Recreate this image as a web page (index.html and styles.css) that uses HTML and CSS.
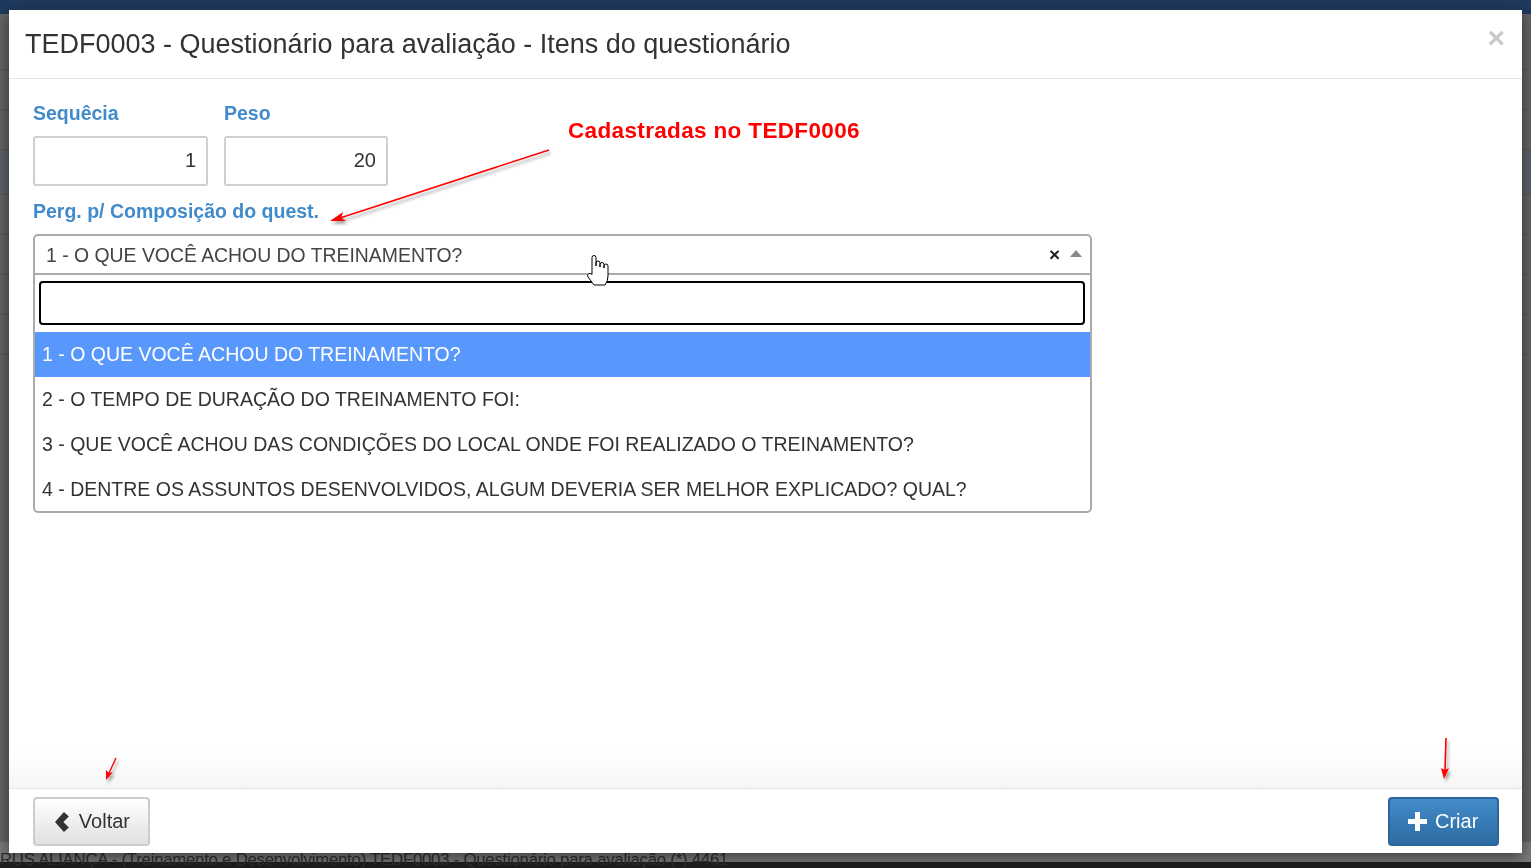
FILE: index.html
```html
<!DOCTYPE html>
<html lang="pt">
<head>
<meta charset="utf-8">
<title>TEDF0003</title>
<link rel="stylesheet" href="styles.css">
</head>
<body>
<div class="app">
  <div class="topbar"></div>
  <div class="content">
    <div class="row"></div><div class="row"></div><div class="row"></div>
    <div class="row sel"></div><div class="row"></div><div class="row"></div>
    <div class="row"></div><div class="row"></div>
  </div>
  <div class="statusbar"><span>RUS ALIANÇA - (Treinamento e Desenvolvimento) TEDF0003 - Questionário para avaliação (*) 4461</span></div>
</div>

<div class="modal">
  <div class="modal-header">
    <h4 class="modal-title">TEDF0003 - Questionário para avaliação - Itens do questionário</h4>
    <span class="close">×</span>
  </div>
  <div class="modal-body">
    <div class="row-fields">
      <div class="form-group g-seq">
        <label class="lbl">Sequêcia</label>
        <div class="input">1</div>
      </div>
      <div class="form-group g-peso">
        <label class="lbl">Peso</label>
        <div class="input">20</div>
      </div>
    </div>
    <div class="form-group">
      <label class="lbl">Perg. p/ Composição do quest.</label>
      <div class="select2">
        <div class="selection">
          <span class="sel-text">1 - O QUE VOCÊ ACHOU DO TREINAMENTO?</span>
          <span class="sel-tools">
            <span class="clear">×</span>
            <span class="arrow"></span>
          </span>
        </div>
        <div class="search-wrap"><div class="search"></div></div>
        <ul class="options">
          <li class="opt active">1 - O QUE VOCÊ ACHOU DO TREINAMENTO?</li>
          <li class="opt">2 - O TEMPO DE DURAÇÃO DO TREINAMENTO FOI:</li>
          <li class="opt">3 - QUE VOCÊ ACHOU DAS CONDIÇÕES DO LOCAL ONDE FOI REALIZADO O TREINAMENTO?</li>
          <li class="opt">4 - DENTRE OS ASSUNTOS DESENVOLVIDOS, ALGUM DEVERIA SER MELHOR EXPLICADO? QUAL?</li>
        </ul>
      </div>
    </div>
  </div>
  <div class="modal-footer">
    <button class="btn btn-default">
      <svg class="ico" width="15" height="20" viewBox="0 0 15 20"><path d="M9 0 L14 4.5 L8.5 10 L14 15.5 L9 20 L0 10 Z" fill="#333"/></svg>
      <span>Voltar</span>
    </button>
    <button class="btn btn-primary">
      <svg class="ico" width="19" height="19" viewBox="0 0 19 19"><path d="M7 0 H12 V7 H19 V12 H12 V19 H7 V12 H0 V7 H7 Z" fill="#fff"/></svg>
      <span>Criar</span>
    </button>
  </div>

  <div class="note">Cadastradas no TEDF0006</div>
  <svg class="arrows" width="1513" height="843" viewBox="9 10 1513 843">
    <defs>
      <filter id="sh" x="-20%" y="-20%" width="140%" height="140%">
        <feGaussianBlur in="SourceAlpha" stdDeviation="1.5"/>
        <feOffset dx="2" dy="3" result="b"/>
        <feComponentTransfer><feFuncA type="linear" slope="0.35"/></feComponentTransfer>
        <feMerge><feMergeNode/><feMergeNode in="SourceGraphic"/></feMerge>
      </filter>
    </defs>
    <g filter="url(#sh)" fill="#f00" stroke="#f00">
      <line x1="549" y1="150" x2="340" y2="218" stroke-width="1.6"/>
      <path d="M330 221 L343 212 L341 218 L346 221 Z" stroke="none"/>
      <line x1="116" y1="758" x2="109" y2="773" stroke-width="1.4"/>
      <path d="M106 780 L106 770 L109 773 L113 772 Z" stroke="none"/>
      <line x1="1446" y1="738" x2="1445" y2="770" stroke-width="1.6"/>
      <path d="M1444 779 L1441 768 L1445 770 L1449 768 Z" stroke="none"/>
    </g>
    <path class="hand" d="M592 270 V257.5 a2 2 0 0 1 4 0 V266 V263 a2 2 0 0 1 4 0 V267 V264.5 a2 2 0 0 1 4 0 V268 V266 a2 2 0 0 1 4 0 V276 q0 5 -3 9 H594 l-6 -8 q-1.5 -2.5 1 -3.5 q1.5 -0.5 3 1 Z" fill="#fff" stroke="#000" stroke-width="1"/>
  </svg>
</div>
</body>
</html>
```

FILE: styles.css
```css
* { box-sizing: border-box; }
html, body { margin: 0; padding: 0; height: 100%; }
body {
  font-family: "Liberation Sans", Arial, sans-serif;
  background: #676767;
  overflow: hidden;
}
.app {
  height: 100vh;
  display: flex;
  flex-direction: column;
}
.topbar {
  height: 14px;
  background: #1f3a5f;
  flex: none;
}
.content {
  flex: 1;
  background: #646464;
  display: flex;
  flex-direction: column;
  padding-top: 16px;
}
.content .row {
  height: 40px;
  border-bottom: 1px solid #575757;
}
.content .row.sel { background: #5d6169; height: 45px; }
.statusbar {
  height: 26px;
  flex: none;
  background: linear-gradient(#7a7a7a 0 20px, #1e1e1e 20px);
  color: #2e2e2e;
  font-size: 16.7px;
  line-height: 17px;
  padding-top: 9px;
  white-space: nowrap;
  overflow: hidden;
  letter-spacing: -0.2px;
}

.modal {
  position: fixed;
  left: 9px;
  top: 10px;
  width: 1513px;
  height: 843px;
  background: #fff;
  box-shadow: 0 4px 14px rgba(0,0,0,.5);
  display: flex;
  flex-direction: column;
  color: #333;
}
.modal-header {
  flex: none;
  height: 69px;
  border-bottom: 1px solid #e5e5e5;
  display: flex;
  align-items: center;
  justify-content: space-between;
  padding: 0 17px 0 16px;
}
.modal-title {
  margin: 0;
  font-weight: normal;
  font-size: 27px;
  line-height: 36px;
  color: #333;
  padding-bottom: 1px;
}
.close {
  font-size: 30px;
  font-weight: bold;
  color: #c9c9c9;
  line-height: 1;
  margin-bottom: 12px;
}
.modal-body {
  flex: 1;
  padding: 20px 24px;
  background: linear-gradient(to bottom, #fff calc(100% - 38px), #f5f5f5);
}
.row-fields {
  display: flex;
  gap: 16px;
}
.form-group { margin-bottom: 11px; }
.g-seq { width: 175px; }
.g-peso { width: 164px; }
.lbl {
  display: block;
  font-weight: bold;
  font-size: 19.5px;
  line-height: 28px;
  color: #428bca;
  margin-bottom: 9px;
}
.input {
  height: 50px;
  border: 2px solid #cfcfcf;
  border-radius: 3px;
  font-size: 20px;
  line-height: 44px;
  text-align: right;
  padding: 0 10px 0 10px;
  color: #333;
}
.select2 {
  width: 1059px;
  border: 2px solid #aaa;
  border-radius: 5px;
  background: #fff;
}
.selection {
  height: 39px;
  border-bottom: 2px solid #aaa;
  display: flex;
  align-items: center;
  justify-content: space-between;
  padding: 0 8px 0 11px;
}
.sel-text {
  font-size: 19.4px;
  color: #444;
  padding-top: 1px;
}
.sel-tools {
  display: flex;
  align-items: center;
  gap: 10px;
}
.clear {
  font-weight: bold;
  font-size: 19px;
  color: #222;
  line-height: 1;
}
.arrow {
  width: 0; height: 0;
  border-left: 6px solid transparent;
  border-right: 6px solid transparent;
  border-bottom: 7px solid #888;
  margin-bottom: 2px;
}
.search-wrap {
  padding: 6px 5px 7px 4px;
}
.search {
  height: 44px;
  border: 2px solid #000;
  border-radius: 4px;
}
.options {
  list-style: none;
  margin: 0;
  padding: 0;
}
.opt {
  height: 45px;
  line-height: 45px;
  padding-left: 7px;
  font-size: 19.5px;
  color: #333;
  white-space: nowrap;
}
.opt:last-child { height: 44px; line-height: 44px; }
.opt.active {
  background: #5897fb;
  color: #fff;
}
.modal-footer {
  flex: none;
  height: 65px;
  border-top: 1px solid #e5e5e5;
  display: flex;
  justify-content: space-between;
  align-items: flex-start;
  padding: 8px 23px 0 24px;
}
.btn {
  height: 49px;
  font-family: inherit;
  font-size: 20px;
  border-radius: 4px;
  display: flex;
  align-items: center;
  gap: 9px;
  padding: 0 18px 0 19px;
  cursor: pointer;
}
.btn-default {
  width: 117px;
  color: #333;
  border: 2px solid #ccc;
  background: linear-gradient(#fff, #e0e0e0);
  padding-left: 20px;
}
.btn-primary {
  width: 111px;
  color: #fff;
  border: 2px solid #2b669a;
  background: linear-gradient(#428bca, #2d6ca2);
  padding-left: 18px;
  gap: 8px;
}
.note {
  position: absolute;
  left: 559px;
  top: 108px;
  font-weight: bold;
  font-size: 22.5px;
  color: #f00;
  letter-spacing: 0.35px;
}
.arrows {
  position: absolute;
  left: 0;
  top: 0;
  pointer-events: none;
}
```
